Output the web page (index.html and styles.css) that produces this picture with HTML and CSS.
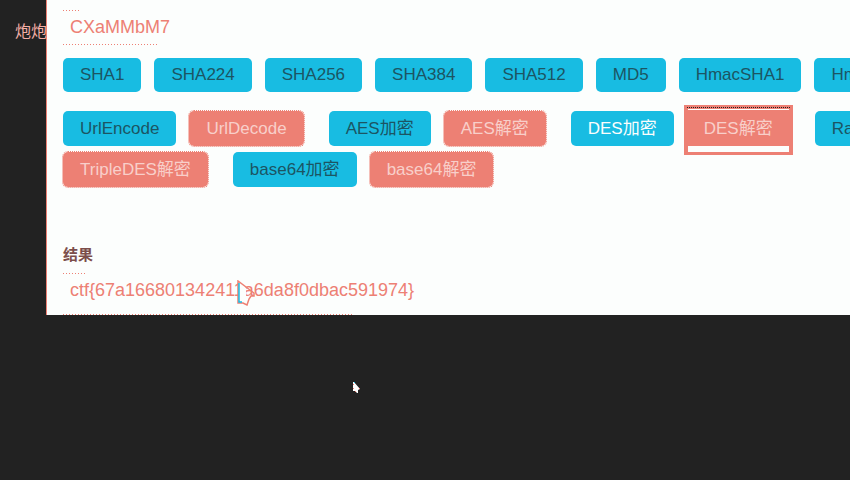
FILE: index.html
```html
<!DOCTYPE html>
<html lang="zh">
<head>
<meta charset="utf-8">
<title>加密解密</title>
<link rel="stylesheet" href="styles.css">
</head>
<body>
<div class="app">
  <aside class="sidebar">炮炮</aside>
  <main class="panel">
    <input class="field source" aria-label="密文" value="CXaMMbM7">
    <div class="row hashes">
      <button class="btn">SHA1</button>
      <button class="btn">SHA224</button>
      <button class="btn">SHA256</button>
      <button class="btn">SHA384</button>
      <button class="btn">SHA512</button>
      <button class="btn">MD5</button>
      <button class="btn">HmacSHA1</button>
      <button class="btn">HmacSHA224</button>
    </div>
    <div class="row ciphers">
      <div class="pair"><button class="btn">UrlEncode</button><button class="btn decode">UrlDecode</button></div>
      <div class="pair"><button class="btn">AES加密</button><button class="btn decode">AES解密</button></div>
      <div class="pair"><button class="btn bright">DES加密</button><button class="btn decode focused">DES解密</button></div>
      <div class="pair"><button class="btn">Rabbit加密</button></div>
    </div>
    <div class="row more">
      <div class="pair"><button class="btn decode">TripleDES解密</button></div>
      <div class="pair"><button class="btn">base64加密</button><button class="btn decode">base64解密</button></div>
    </div>
    <label class="label" for="result">结果</label>
    <input class="field result" id="result" value="ctf{67a166801342411a6da8f0dbac591974}">
  </main>
</div>
<svg class="pointer trail" viewBox="0 0 19 26" aria-hidden="true"><path d="M1 1V23H6L9 21V8Z" fill="#fcfefd"/><path d="M1 1V23H6L10 25L12 19L14 16H17V13Z" fill="none" stroke="#ed8074" stroke-width="1.5"/><path d="M2 3V22H5" fill="none" stroke="#18bce2" stroke-width="1.5"/></svg>
<svg class="pointer live" viewBox="0 0 7 12" aria-hidden="true"><path d="M0 0H1L7 7L5 8V11H4L2 9H0Z" fill="#fff"/><path d="M1 0H2V1H1Z" fill="#18bce2"/><path d="M0 2H1V3H0ZM0 6H1V7H0ZM6 6H7V7H6ZM2 9H3V10H2Z" fill="#ed8074"/></svg>
</body>
</html>
```
FILE: styles.css
```css
:root {
  --dark: #222;
  --blue: #18bce2;
  --coral: #ed8074;
  --paper: #fcfefd;
}

* { box-sizing: border-box; }

body {
  margin: 0;
  min-height: 100vh;
  background: var(--dark);
  font: 17px/24px "Liberation Sans", "Noto Sans CJK SC", sans-serif;
  overflow: hidden;
}

.app { display: flex; }

.sidebar {
  flex: 0 0 47px;
  padding: 20px 0 0 15px;
  border-right: 1px solid var(--coral);
  color: #f3aea6;
  font-size: 16px;
  white-space: nowrap;
  overflow: hidden;
}

.panel {
  flex: 1;
  min-width: 0;
  padding: 10px 0 0 16px;
  background: var(--paper);
  overflow: hidden;
}

.field {
  display: block;
  width: 370px;
  height: 35px;
  margin: 0;
  padding: 0 7px;
  border: 0;
  color: var(--coral);
  font: inherit;
  font-size: 18px;
  background: repeating-linear-gradient(90deg, var(--coral) 0 1px, transparent 1px 3px) 0 100% / 96px 1px no-repeat,
    repeating-linear-gradient(90deg, var(--coral) 0 1px, transparent 1px 3px) 0 0 / 18px 1px no-repeat;
}

.row {
  display: flex;
  width: max-content;
}

.hashes { gap: 13px; margin-top: 13px; }
.ciphers { gap: 25px; margin-top: 19px; }
.more { gap: 25px; margin-top: 6px; }
.pair { display: flex; gap: 13px; }

.btn {
  height: 34px;
  padding: 0 17px;
  border: 0;
  border-radius: 5px;
  background: var(--blue);
  color: #1c5563;
  font: inherit;
  white-space: nowrap;
}

.ciphers .btn,
.more .btn { height: 35px; }

.btn.decode {
  background: var(--coral);
  color: #f8cfca;
  outline: 1px dotted var(--coral);
}

.btn.bright { color: var(--paper); }

.btn.focused {
  position: relative;
  outline: 0;
}

/* Focus ring with a light strip along its top and bottom edges */
.btn.focused::before {
  content: "";
  position: absolute;
  inset: -6px -3px -9px;
  z-index: -1;
  border: 4px solid var(--coral);
  border-bottom-width: 3px;
  background: linear-gradient(var(--paper) 0 1px, var(--coral) 1px calc(100% - 6px), var(--paper) calc(100% - 6px)) padding-box;
}

.btn.focused::after {
  content: "";
  position: absolute;
  inset: -4px 0 auto;
  border-top: 1px dotted var(--dark);
}

.ciphers {
  position: relative;
  z-index: 0;
}

.label {
  display: block;
  margin-top: 56px;
  color: #7c4e4b;
  font-size: 15px;
  font-weight: 700;
}

.result {
  height: 42px;
  margin-top: 6px;
  padding-bottom: 8px;
  background-size: 290px 1px, 24px 1px;
}

.pointer { position: absolute; }
.trail { left: 237px; top: 280px; width: 19px; height: 26px; }
.live { left: 353px; top: 382px; width: 7px; height: 12px; }
```
